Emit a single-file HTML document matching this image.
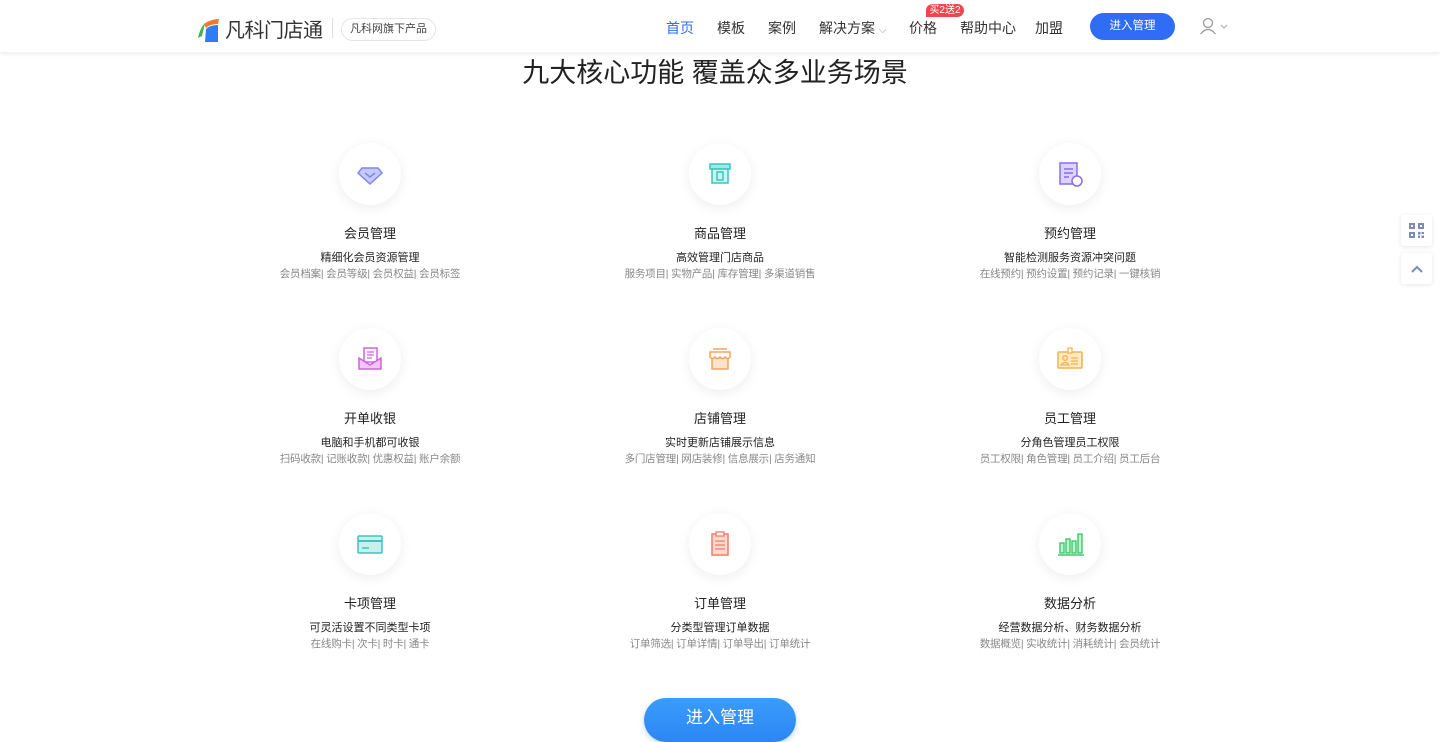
<!DOCTYPE html>
<html><head><meta charset="utf-8">
<style>
*{margin:0;padding:0;box-sizing:border-box}
body{width:1440px;height:719px;overflow:hidden;background:#fff;font-family:"Liberation Sans","Noto Sans CJK SC",sans-serif;position:relative;color:#333}
.hdr{position:absolute;left:0;top:0;width:1440px;height:52px;background:#fff;box-shadow:0 2px 4px rgba(0,0,0,.08);z-index:2}
.logo{position:absolute;left:196px;top:14px;display:flex;align-items:center}
.logo .t{font-size:20px;color:#333;margin-left:3px;letter-spacing:-0.5px}
.sep{position:absolute;left:332px;top:18px;width:1px;height:20px;background:#ddd}
.pill{position:absolute;left:341px;top:18px;height:23px;padding:0 8px;border:1px solid #e5e5e5;border-radius:12px;font-size:11px;line-height:21px;color:#444}
.nav{position:absolute;top:18px;font-size:14px;color:#333}
.btn{position:absolute;left:1090px;top:13px;width:85px;height:27px;border-radius:14px;background:#2f6df6;color:#fff;font-size:11.5px;text-align:center;line-height:27px}
.badge{position:absolute;left:926px;top:4px;width:38px;height:13px;border-radius:7px 7px 7px 0;background:#f0454e;color:#fff;font-size:10px;line-height:13px;text-align:center}
h1{position:absolute;left:0;width:1430px;top:51px;text-align:center;font-size:27px;font-weight:normal;color:#222}
.it{position:absolute;width:300px;text-align:center}
.circ{width:62px;height:62px;border-radius:50%;margin:0 auto;background:#fff;box-shadow:0 3px 12px rgba(0,0,0,.07);display:flex;align-items:center;justify-content:center}
.tt{margin-top:21px;font-size:13px;color:#222;line-height:16px}
.sub{margin-top:9px;font-size:11px;color:#222;line-height:14px}
.tg{margin-top:2px;font-size:10.5px;color:#888;line-height:14px;letter-spacing:-0.2px}
.side{position:absolute;left:1401px;width:31px;height:31px;background:#fff;border-radius:3px;box-shadow:0 1px 5px rgba(0,0,0,.1);display:flex;align-items:center;justify-content:center}
.big{position:absolute;left:644px;top:698px;width:152px;height:44px;border-radius:22px;background:linear-gradient(#3a9cfb,#2c86f4);color:#fff;font-size:17px;text-align:center;line-height:40px;box-shadow:0 2px 6px rgba(44,134,244,.3)}
</style></head><body>
<div class="hdr">
 <div class="logo"><svg width="26" height="26" viewBox="0 0 26 26"><path d="M2 22 Q4 12 9 7 L6 20Z" fill="#3cb54a"/><path d="M8 8 Q15 3 23 3 L22 8 Q14 8 10 12Z" fill="#f07a2a"/><path d="M10 13 Q14 9 22 9 L22 26 L9 26Z" fill="#2f7df6"/></svg><span class="t">凡科门店通</span></div>
 <div class="sep"></div>
 <div class="pill">凡科网旗下产品</div>
 <div class="nav" style="left:666px;color:#2f6df6">首页</div>
 <div class="nav" style="left:717px">模板</div>
 <div class="nav" style="left:768px">案例</div>
 <div class="nav" style="left:819px">解决方案 <span style="font-size:10px;color:#999">⌵</span></div>
 <div class="badge">买2送2</div>
 <div class="nav" style="left:909px">价格</div>
 <div class="nav" style="left:960px">帮助中心</div>
 <div class="nav" style="left:1035px">加盟</div>
 <div class="btn">进入管理</div>
 <svg style="position:absolute;left:1199px;top:17px" width="32" height="18" viewBox="0 0 32 18"><circle cx="9" cy="6" r="4.5" fill="none" stroke="#999" stroke-width="1.3"/><path d="M1.5 17 Q9 8 16.5 17" fill="none" stroke="#999" stroke-width="1.3"/><path d="M22 8 l3 3 l3-3" fill="none" stroke="#aaa" stroke-width="1"/></svg>
</div>
<h1>九大核心功能 覆盖众多业务场景</h1>

<div class="it" style="left:220px;top:143px"><div class="circ"><svg width="30" height="30" viewBox="0 0 30 30"><path d="M7 9h16l4 5-12 11L3 14z" fill="#c5c9ff" stroke="#7f86f5" stroke-width="1.5"/><path d="M10 14l5 4 5-4" fill="none" stroke="#7f86f5" stroke-width="1.5"/></svg></div><div class="tt">会员管理</div><div class="sub">精细化会员资源管理</div><div class="tg">会员档案| 会员等级| 会员权益| 会员标签</div></div>
<div class="it" style="left:570px;top:143px"><div class="circ"><svg width="30" height="30" viewBox="0 0 30 30"><rect x="5" y="5" width="20" height="5" fill="#9ee9e4" stroke="#3cc6bd" stroke-width="1.5"/><rect x="7" y="10" width="16" height="14" fill="#c7f3f0" stroke="#3cc6bd" stroke-width="1.5"/><rect x="12" y="13" width="6" height="8" fill="none" stroke="#3cc6bd" stroke-width="1.5"/></svg></div><div class="tt">商品管理</div><div class="sub">高效管理门店商品</div><div class="tg">服务项目| 实物产品| 库存管理| 多渠道销售</div></div>
<div class="it" style="left:920px;top:143px"><div class="circ"><svg width="30" height="30" viewBox="0 0 30 30"><rect x="5" y="4" width="17" height="21" fill="#ddd4fb" stroke="#8a6bf0" stroke-width="1.5"/><path d="M9 10h9M9 14h9M9 18h5" stroke="#8a6bf0" stroke-width="1.5"/><circle cx="22" cy="22" r="5" fill="#fff" stroke="#8a6bf0" stroke-width="1.5"/></svg></div><div class="tt">预约管理</div><div class="sub">智能检测服务资源冲突问题</div><div class="tg">在线预约| 预约设置| 预约记录| 一键核销</div></div>

<div class="it" style="left:220px;top:328px"><div class="circ"><svg width="30" height="30" viewBox="0 0 30 30"><rect x="9" y="4" width="13" height="14" fill="#fff" stroke="#d062e0" stroke-width="1.5"/><path d="M12 8h7M12 11h7M12 14h5" stroke="#d062e0" stroke-width="1.3"/><path d="M4 14l11 7 11-7v11H4z" fill="#f2c6f7" stroke="#d062e0" stroke-width="1.5"/></svg></div><div class="tt">开单收银</div><div class="sub">电脑和手机都可收银</div><div class="tg">扫码收款| 记账收款| 优惠权益| 账户余额</div></div>
<div class="it" style="left:570px;top:328px"><div class="circ"><svg width="30" height="30" viewBox="0 0 30 30"><path d="M8 5h14" stroke="#f5a25a" stroke-width="1.5"/><rect x="7" y="12" width="16" height="13" fill="#ffe4cc" stroke="#f5a25a" stroke-width="1.5"/><path d="M5 8h20v5q-2.5 3-5 0q-2.5 3-5 0q-2.5 3-5 0q-2.5 3-5 0z" fill="#fff" stroke="#f5a25a" stroke-width="1.5"/></svg></div><div class="tt">店铺管理</div><div class="sub">实时更新店铺展示信息</div><div class="tg">多门店管理| 网店装修| 信息展示| 店务通知</div></div>
<div class="it" style="left:920px;top:328px"><div class="circ"><svg width="30" height="30" viewBox="0 0 30 30"><rect x="3" y="8" width="24" height="16" rx="1" fill="#ffe9c7" stroke="#f7b24a" stroke-width="1.5"/><rect x="13" y="4" width="4" height="5" fill="#fff" stroke="#f7b24a" stroke-width="1.3"/><circle cx="10" cy="14" r="2.3" fill="none" stroke="#f7b24a" stroke-width="1.3"/><path d="M6 21q4-5 8 0zM16 14h7M16 17h7M16 20h7" fill="none" stroke="#f7b24a" stroke-width="1.3"/></svg></div><div class="tt">员工管理</div><div class="sub">分角色管理员工权限</div><div class="tg">员工权限| 角色管理| 员工介绍| 员工后台</div></div>

<div class="it" style="left:220px;top:513px"><div class="circ"><svg width="30" height="30" viewBox="0 0 30 30"><rect x="3" y="7" width="24" height="17" rx="1" fill="#c7f1ec" stroke="#3cc6bd" stroke-width="1.5"/><path d="M3 12h24" stroke="#3cc6bd" stroke-width="2"/><path d="M7 19h7" stroke="#3cc6bd" stroke-width="1.5"/></svg></div><div class="tt">卡项管理</div><div class="sub">可灵活设置不同类型卡项</div><div class="tg">在线购卡| 次卡| 时卡| 通卡</div></div>
<div class="it" style="left:570px;top:513px"><div class="circ"><svg width="30" height="30" viewBox="0 0 30 30"><rect x="7" y="5" width="16" height="21" fill="#ffd9d2" stroke="#f47b63" stroke-width="1.5"/><rect x="11" y="3" width="8" height="4" fill="#fff" stroke="#f47b63" stroke-width="1.3"/><path d="M10 12h10M10 16h10M10 20h10" stroke="#f47b63" stroke-width="1.3"/></svg></div><div class="tt">订单管理</div><div class="sub">分类型管理订单数据</div><div class="tg">订单筛选| 订单详情| 订单导出| 订单统计</div></div>
<div class="it" style="left:920px;top:513px"><div class="circ"><svg width="30" height="30" viewBox="0 0 30 30"><rect x="5" y="14" width="4" height="10" fill="#c5f2d2" stroke="#3ccb6a" stroke-width="1.4"/><rect x="11" y="10" width="4" height="14" fill="#c5f2d2" stroke="#3ccb6a" stroke-width="1.4"/><rect x="17" y="12" width="4" height="12" fill="#c5f2d2" stroke="#3ccb6a" stroke-width="1.4"/><rect x="23" y="5" width="4" height="19" fill="#c5f2d2" stroke="#3ccb6a" stroke-width="1.4"/><path d="M3 26h26" stroke="#3ccb6a" stroke-width="1.4"/></svg></div><div class="tt">数据分析</div><div class="sub">经营数据分析、财务数据分析</div><div class="tg">数据概览| 实收统计| 消耗统计| 会员统计</div></div>

<div class="side" style="top:215px"><svg width="15" height="15" viewBox="0 0 15 15" fill="#7b8bb5"><rect x="0" y="0" width="6" height="6"/><rect x="9" y="0" width="6" height="6"/><rect x="0" y="9" width="6" height="6"/><rect x="9" y="9" width="2.5" height="2.5"/><rect x="12.5" y="12.5" width="2.5" height="2.5"/><rect x="9" y="12.5" width="2" height="2.5"/><rect x="12.5" y="9" width="2.5" height="2"/><rect x="2" y="2" width="2" height="2" fill="#fff"/><rect x="11" y="2" width="2" height="2" fill="#fff"/><rect x="2" y="11" width="2" height="2" fill="#fff"/></svg></div>
<div class="side" style="top:253px"><svg width="14" height="10" viewBox="0 0 14 10"><path d="M2 8l5-5 5 5" fill="none" stroke="#7b8bb5" stroke-width="2"/></svg></div>
<div class="big">进入管理</div>
</body></html>
